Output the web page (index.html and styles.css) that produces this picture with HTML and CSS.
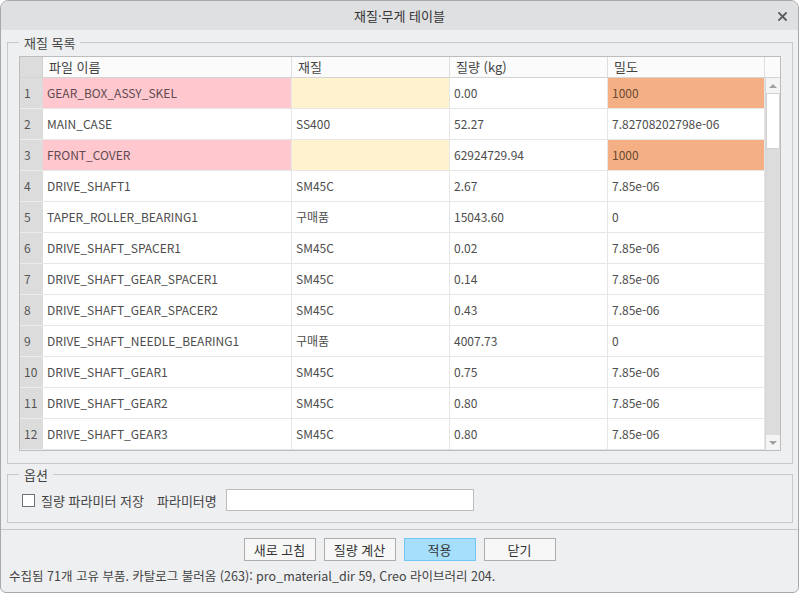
FILE: index.html
```html
<!DOCTYPE html>
<html lang="ko">
  <head>
    <meta charset="UTF-8" />
    <title>재질·무게 테이블</title>
    <link rel="stylesheet" href="styles.css">
  </head>
  <body>
    <div class="dialog">
      <header class="titlebar">
        <span></span>
        <span class="title">재질·무게 테이블</span>
        <button class="close-btn" title="닫기">
          <svg width="9" height="9" viewBox="0 0 9 9">
            <path d="M1 1L8 8M8 1L1 8" stroke="#5a5a5a" stroke-width="1.8" stroke-linecap="square" fill="none"></path>
          </svg>
        </button>
      </header>

      <div class="content">
        <fieldset class="group materials">
          <legend>재질 목록</legend>
          <div class="grid">
            <div class="grid-head">
              <div class="num"></div>
              <div class="head-cell">파일 이름</div>
              <div class="head-cell">재질</div>
              <div class="head-cell">질량 (kg)</div>
              <div class="head-cell">밀도</div>
              <div class="head-corner"></div>
            </div>
            <div class="grid-body">
              <div class="rows">
                <div class="row">
                  <div class="num">1</div>
                  <div class="cell missing">GEAR_BOX_ASSY_SKEL</div>
                  <div class="cell blank"></div>
                  <div class="cell">0.00</div>
                  <div class="cell warn">1000</div>
                </div>
                <div class="row">
                  <div class="num">2</div>
                  <div class="cell">MAIN_CASE</div>
                  <div class="cell">SS400</div>
                  <div class="cell">52.27</div>
                  <div class="cell">7.82708202798e-06</div>
                </div>
                <div class="row">
                  <div class="num">3</div>
                  <div class="cell missing">FRONT_COVER</div>
                  <div class="cell blank"></div>
                  <div class="cell">62924729.94</div>
                  <div class="cell warn">1000</div>
                </div>
                <div class="row">
                  <div class="num">4</div>
                  <div class="cell">DRIVE_SHAFT1</div>
                  <div class="cell">SM45C</div>
                  <div class="cell">2.67</div>
                  <div class="cell">7.85e-06</div>
                </div>
                <div class="row">
                  <div class="num">5</div>
                  <div class="cell">TAPER_ROLLER_BEARING1</div>
                  <div class="cell">구매품</div>
                  <div class="cell">15043.60</div>
                  <div class="cell">0</div>
                </div>
                <div class="row">
                  <div class="num">6</div>
                  <div class="cell">DRIVE_SHAFT_SPACER1</div>
                  <div class="cell">SM45C</div>
                  <div class="cell">0.02</div>
                  <div class="cell">7.85e-06</div>
                </div>
                <div class="row">
                  <div class="num">7</div>
                  <div class="cell">DRIVE_SHAFT_GEAR_SPACER1</div>
                  <div class="cell">SM45C</div>
                  <div class="cell">0.14</div>
                  <div class="cell">7.85e-06</div>
                </div>
                <div class="row">
                  <div class="num">8</div>
                  <div class="cell">DRIVE_SHAFT_GEAR_SPACER2</div>
                  <div class="cell">SM45C</div>
                  <div class="cell">0.43</div>
                  <div class="cell">7.85e-06</div>
                </div>
                <div class="row">
                  <div class="num">9</div>
                  <div class="cell">DRIVE_SHAFT_NEEDLE_BEARING1</div>
                  <div class="cell">구매품</div>
                  <div class="cell">4007.73</div>
                  <div class="cell">0</div>
                </div>
                <div class="row">
                  <div class="num">10</div>
                  <div class="cell">DRIVE_SHAFT_GEAR1</div>
                  <div class="cell">SM45C</div>
                  <div class="cell">0.75</div>
                  <div class="cell">7.85e-06</div>
                </div>
                <div class="row">
                  <div class="num">11</div>
                  <div class="cell">DRIVE_SHAFT_GEAR2</div>
                  <div class="cell">SM45C</div>
                  <div class="cell">0.80</div>
                  <div class="cell">7.85e-06</div>
                </div>
                <div class="row">
                  <div class="num">12</div>
                  <div class="cell">DRIVE_SHAFT_GEAR3</div>
                  <div class="cell">SM45C</div>
                  <div class="cell">0.80</div>
                  <div class="cell">7.85e-06</div>
                </div>
              </div>
              <div class="scrollbar">
                <div class="scroll-btn"><span class="arrow up"></span></div>
                <div class="scroll-thumb"></div>
                <div class="scroll-track"></div>
                <div class="scroll-btn"><span class="arrow down"></span></div>
              </div>
            </div>
          </div>
        </fieldset>

        <fieldset class="group options">
          <legend>옵션</legend>
          <div class="option-row">
            <span class="checkbox"></span>
            <label class="check-label">질량 파라미터 저장</label>
            <label class="param-label" for="param-name">파라미터명</label>
            <input type="text" id="param-name" class="text-input" />
          </div>
        </fieldset>
      </div>

      <footer class="footer">
        <div class="buttons">
          <button class="btn">새로 고침</button>
          <button class="btn">질량 계산</button>
          <button class="btn primary">적용</button>
          <button class="btn">닫기</button>
        </div>
        <div class="status">수집됨 71개 고유 부품. 카탈로그 불러옴 (263): pro_material_dir 59, Creo 라이브러리 204.</div>
      </footer>
    </div>
  </body>
</html>
```

FILE: styles.css
```css
* {
  box-sizing: border-box;
}

body {
  margin: 0;
  padding: 0;
  background: #ffffff;
  font-family: "Noto Sans CJK KR", "Noto Sans", sans-serif;
  font-size: 12px;
  color: #4d4d4d;
}

.dialog {
  width: 799px;
  height: 593px;
  border: 1px solid #a8a8a8;
  border-radius: 8px 8px 6px 6px;
  background: #eeeff1;
  overflow: hidden;
  display: flex;
  flex-direction: column;
}

/* title bar */
.titlebar {
  height: 29px;
  flex: none;
  display: grid;
  grid-template-columns: 1fr auto 1fr;
  align-items: center;
  background: #dfe0e2;
}
.title {
  font-size: 13px;
  color: #333;
  line-height: 17px;
}
.close-btn {
  justify-self: end;
  margin: 1px 11px 0 0;
  padding: 0;
  width: 9px;
  height: 9px;
  border: none;
  background: transparent;
  display: flex;
}

/* group boxes */
.content {
  padding: 0 5px 0 6px;
}
.group {
  margin: 4px 0 0;
  min-width: 0;
  border: 1px solid #c9c9c9;
  padding: 5px 11px 12px 11px;
}
.group legend {
  padding: 0 5px;
  font-size: 13px;
  line-height: 17px;
  color: #444;
}

/* table */
.grid {
  border: 1px solid #bdbdbd;
  background: #ffffff;
}
.grid-head,
.row {
  display: grid;
  grid-template-columns: 23px 249px 158px 158px 157px;
}
.grid-head {
  grid-template-columns: 23px 249px 158px 158px 157px 1fr;
  height: 21px;
  background: #fbfbfb;
  border-bottom: 1px solid #d4d4d4;
}
.head-cell {
  padding-left: 6px;
  font-size: 13px;
  line-height: 20px;
  border-right: 1px solid #dedede;
  color: #444;
}
.num {
  background: #dcdcdc;
  padding-left: 4px;
  color: #555;
}
.grid-head .num {
  border-right: 1px solid #d0d0d0;
}
.grid-body {
  display: flex;
}
.rows {
  flex: 1;
}
.row {
  height: 31px;
  line-height: 30px;
  border-bottom: 1px solid #e6e6e6;
}
.row .num {
  border-bottom: 1px solid #ececec;
  margin-bottom: -1px;
}
.cell {
  padding-left: 4px;
  border-right: 1px solid #e6e6e6;
  white-space: nowrap;
  overflow: hidden;
}
.cell.missing {
  background: #ffc7ce;
  color: #5e4b50;
}
.cell.blank {
  background: #fff2cf;
}
.cell.warn {
  background: #f4b084;
  color: #6a4a35;
}

/* scrollbar */
.scrollbar {
  width: 15px;
  display: flex;
  flex-direction: column;
  background: #dcdcdc;
  border-left: 1px solid #d6d6d6;
}
.scroll-btn {
  height: 15px;
  background: #f4f4f4;
  display: flex;
  align-items: center;
  justify-content: center;
}
.arrow {
  width: 0;
  height: 0;
  border-left: 4px solid transparent;
  border-right: 4px solid transparent;
}
.arrow.up {
  border-bottom: 4px solid #a0a0a0;
}
.arrow.down {
  border-top: 4px solid #a0a0a0;
}
.scroll-thumb {
  height: 56px;
  background: #ffffff;
  border: 1px solid #d2d2d2;
}
.scroll-track {
  flex: 1;
}

/* options */
.options {
  margin-top: 2px;
  padding: 6px 11px 11px 11px;
}
.option-row {
  display: flex;
  align-items: center;
  height: 22px;
}
.checkbox {
  width: 13px;
  height: 13px;
  margin-left: 3px;
  border: 1px solid #707070;
  background: #ffffff;
}
.check-label {
  margin-left: 6px;
  margin-right: 13px;
  font-size: 13px;
  color: #444;
}
.param-label {
  margin-right: 9px;
  font-size: 13px;
  color: #444;
}
.text-input {
  width: 248px;
  height: 22px;
  border: 1px solid #bdbdbd;
  background: #ffffff;
  margin: 0;
  padding: 0 4px;
  font: inherit;
}

/* footer */
.footer {
  margin-top: 6px;
  border-top: 1px solid #c8c8c8;
}
.buttons {
  display: flex;
  justify-content: center;
  gap: 8px;
  padding-top: 8px;
}
.btn {
  width: 72px;
  height: 23px;
  margin: 0;
  padding: 0;
  border: 1px solid #adadad;
  background: #f7f7f7;
  font-family: inherit;
  font-size: 13px;
  color: #333;
  line-height: 21px;
}
.btn.primary {
  background: #a6dffc;
  border-color: #72c6f3;
}
.status {
  margin-top: 7px;
  padding-left: 8px;
  font-size: 12.5px;
  line-height: 16px;
  color: #444;
}
```
